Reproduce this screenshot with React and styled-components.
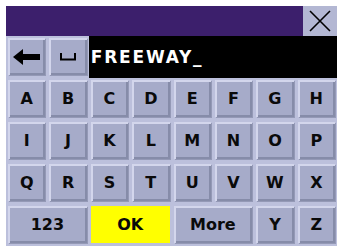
import React from 'react';
import styled, { createGlobalStyle } from 'styled-components';

const Global = createGlobalStyle`
  html, body { margin: 0; padding: 0; background: #ffffff; }
  body { width: 337px; height: 251px; overflow: hidden; }
`;

const Screen = styled.div`
  padding: 6px 0 0 6px;
  width: 331px;
  font-family: "DejaVu Sans", "Liberation Sans", sans-serif;
  font-weight: bold;
`;

const TitleBar = styled.div`
  display: grid;
  grid-template-columns: 1fr 34px;
  height: 30px;
`;

const Title = styled.div`
  background: #3c1f6c;
`;

const CloseButton = styled.button`
  display: flex;
  align-items: center;
  justify-content: center;
  padding: 0;
  border: none;
  background: #b3b7d3;
  cursor: pointer;
`;

const Board = styled.div`
  display: grid;
  grid-template-columns: repeat(8, 1fr);
  grid-auto-rows: 42px;
  background: #bcc0dc;
`;

const Key = styled.button`
  grid-column: span ${p => p.span || 1};
  margin: 2px 2px 3px 2px;
  padding: 0;
  display: flex;
  align-items: center;
  justify-content: center;
  border: none;
  background: ${p => (p.yellow ? '#ffff00' : '#a6abc9')};
  box-shadow: ${p => (p.yellow
    ? 'none'
    : 'inset 2px 2px 0 #d3d6ec, inset -2px -2px 0 #868ca9, 1px 1px 0 #9499b6')};
  font-family: "DejaVu Sans", "Liberation Sans", sans-serif;
  font-weight: bold;
  font-size: 16px;
  color: #0a0a0a;
  cursor: pointer;
`;

const Field = styled.div`
  grid-column: span 6;
  background: #000000;
  color: #ffffff;
  display: flex;
  align-items: center;
  padding-left: 2px;
  font-size: 17px;
  letter-spacing: 1.8px;
`;

const BackIcon = () => (
  <svg width="28" height="16" viewBox="0 0 28 16">
    <polygon points="0,8 10,0 10,5 27,5 27,11 10,11 10,16" fill="#000" />
  </svg>
);

const SpaceIcon = () => (
  <svg width="16" height="8" viewBox="0 0 16 8">
    <path d="M1 0 V6.5 H15 V0" fill="none" stroke="#000" strokeWidth="2" />
  </svg>
);

const CloseIcon = () => (
  <svg width="24" height="24" viewBox="0 0 24 24">
    <path d="M2 2 L22 22 M22 2 L2 22" stroke="#000" strokeWidth="1.6" />
  </svg>
);

const rows = ['ABCDEFGH', 'IJKLMNOP', 'QRSTUVWX'];

export default function App() {
  return (
    <Screen>
      <Global />
      <TitleBar>
        <Title />
        <CloseButton><CloseIcon /></CloseButton>
      </TitleBar>
      <Board>
        <Key><BackIcon /></Key>
        <Key><SpaceIcon /></Key>
        <Field>FREEWAY_</Field>
        {rows.map(r => r.split('').map(c => <Key key={c}>{c}</Key>))}
        <Key span={2}>123</Key>
        <Key span={2} yellow>OK</Key>
        <Key span={2}>More</Key>
        <Key>Y</Key>
        <Key>Z</Key>
      </Board>
    </Screen>
  );
}
